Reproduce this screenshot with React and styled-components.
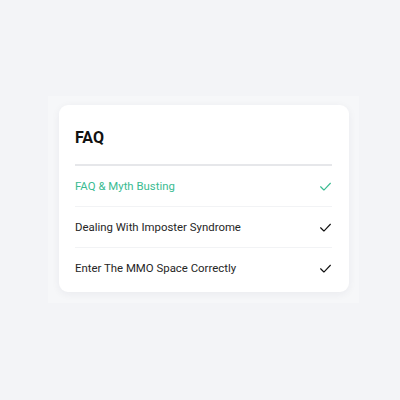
import React from "react";
import styled, { createGlobalStyle } from "styled-components";

const GlobalStyle = createGlobalStyle`
  body {
    margin: 0;
    background: #f3f4f7;
    font-family: Roboto, "Liberation Sans", sans-serif;
  }
`;

const Page = styled.div`
  width: 400px;
  height: 400px;
  padding: 96px 0 0 48px;
  box-sizing: border-box;
`;

const Frame = styled.div`
  width: 311px;
  box-sizing: border-box;
  padding: 9px 10px 11px 11px;
  background: #f6f7f9;
`;

const Card = styled.div`
  background: #ffffff;
  border-radius: 9px;
  padding: 20px 17px 4px 16px;
  box-shadow: 0 2px 8px rgba(30, 40, 60, 0.06);
`;

const Title = styled.h2`
  margin: 0 0 14px;
  font-size: 16px;
  line-height: 25px;
  font-weight: 700;
  color: #111;
`;

const Divider = styled.div`
  height: 2px;
  background: #e6e7ea;
`;

const List = styled.ul`
  list-style: none;
  margin: 0;
  padding: 0;
`;

const Row = styled.li`
  display: flex;
  align-items: center;
  justify-content: space-between;
  height: 40px;
  font-size: 11.4px;
  color: ${props => (props.active ? "#3abb91" : "#262626")};
  & + & {
    border-top: 1px solid #f2f3f5;
  }
`;

const Check = ({ color }) => (
  <svg width="13" height="13" viewBox="0 0 24 24" fill="none" stroke={color} strokeWidth="2.1" strokeLinecap="round" strokeLinejoin="round">
    <path d="M3 12.5l6 6L21 6" />
  </svg>
);

const items = [
  { title: "FAQ & Myth Busting", active: true },
  { title: "Dealing With Imposter Syndrome" },
  { title: "Enter The MMO Space Correctly" },
];

export default function App() {
  return (
    <>
      <GlobalStyle />
      <Page>
        <Frame>
          <Card>
            <Title>FAQ</Title>
            <Divider />
            <List>
              {items.map(item => (
                <Row key={item.title} active={item.active}>
                  {item.title}
                  <Check color={item.active ? "#3abb91" : "#111"} />
                </Row>
              ))}
            </List>
          </Card>
        </Frame>
      </Page>
    </>
  );
}
